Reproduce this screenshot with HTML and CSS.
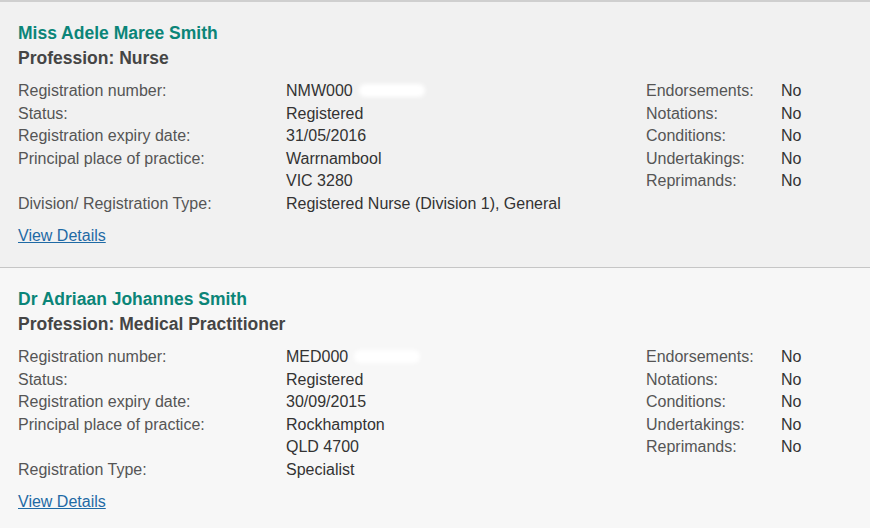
FILE: index.html
```html
<!DOCTYPE html>
<html>
<head>
<meta charset="utf-8">
<link rel="stylesheet" href="styles.css">
</head>
<body>
<div class="list">
  <div class="card card-a">
    <h2 class="name">Miss Adele Maree Smith</h2>
    <h3 class="prof">Profession: Nurse</h3>
    <div class="details">
      <div class="main">
        <div class="lbl">Registration number:</div><div class="val">NMW000<span class="redact"></span></div>
        <div class="lbl">Status:</div><div class="val">Registered</div>
        <div class="lbl">Registration expiry date:</div><div class="val">31/05/2016</div>
        <div class="lbl">Principal place of practice:</div><div class="val">Warrnambool<br>VIC 3280</div>
        <div class="lbl">Division/ Registration Type:</div><div class="val">Registered Nurse (Division 1), General</div>
      </div>
      <div class="side">
        <div class="lbl">Endorsements:</div><div class="val">No</div>
        <div class="lbl">Notations:</div><div class="val">No</div>
        <div class="lbl">Conditions:</div><div class="val">No</div>
        <div class="lbl">Undertakings:</div><div class="val">No</div>
        <div class="lbl">Reprimands:</div><div class="val">No</div>
      </div>
    </div>
    <a class="link" href="#">View Details</a>
  </div>
  <div class="card card-b">
    <h2 class="name">Dr Adriaan Johannes Smith</h2>
    <h3 class="prof">Profession: Medical Practitioner</h3>
    <div class="details">
      <div class="main">
        <div class="lbl">Registration number:</div><div class="val">MED000<span class="redact"></span></div>
        <div class="lbl">Status:</div><div class="val">Registered</div>
        <div class="lbl">Registration expiry date:</div><div class="val">30/09/2015</div>
        <div class="lbl">Principal place of practice:</div><div class="val">Rockhampton<br>QLD 4700</div>
        <div class="lbl">Registration Type:</div><div class="val">Specialist</div>
      </div>
      <div class="side">
        <div class="lbl">Endorsements:</div><div class="val">No</div>
        <div class="lbl">Notations:</div><div class="val">No</div>
        <div class="lbl">Conditions:</div><div class="val">No</div>
        <div class="lbl">Undertakings:</div><div class="val">No</div>
        <div class="lbl">Reprimands:</div><div class="val">No</div>
      </div>
    </div>
    <a class="link" href="#">View Details</a>
  </div>
</div>
</body>
</html>
```
FILE: styles.css
```css
html, body {
  margin: 0;
  padding: 0;
  background: #f7f7f7;
}
body {
  font-family: "Liberation Sans", Arial, sans-serif;
  font-size: 16px;
  color: #333;
}
.list {
  border-top: 2px solid #cfcfcf;
}
.card {
  padding: 19px 0 19px 18px;
  height: 227px;
}
.card-a {
  background: #f1f1f1;
  border-bottom: 1px solid #c6c6c6;
}
.card-b {
  background: #f7f7f7;
}
.name {
  margin: 0;
  font-size: 17.5px;
  line-height: 25px;
  font-weight: bold;
  color: #0b8578;
}
.prof {
  margin: 0;
  font-size: 17.5px;
  line-height: 24px;
  font-weight: bold;
  color: #454545;
}
.details {
  display: flex;
  margin-top: 10px;
  line-height: 22.6px;
}
.main {
  display: grid;
  grid-template-columns: 268px 360px;
  width: 628px;
}
.side {
  display: grid;
  grid-template-columns: 135px auto;
  align-content: start;
}
.lbl {
  color: #555;
}
.val {
  color: #333;
}
.redact {
  display: inline-block;
  width: 66px;
  height: 13px;
  margin-left: 6px;
  vertical-align: -1px;
  background: #ffffff;
  border-radius: 6px;
  filter: blur(2px);
}
.link {
  display: inline-block;
  margin-top: 9px;
  line-height: 22px;
  color: #1f6aa5;
  text-decoration: underline;
}
```
